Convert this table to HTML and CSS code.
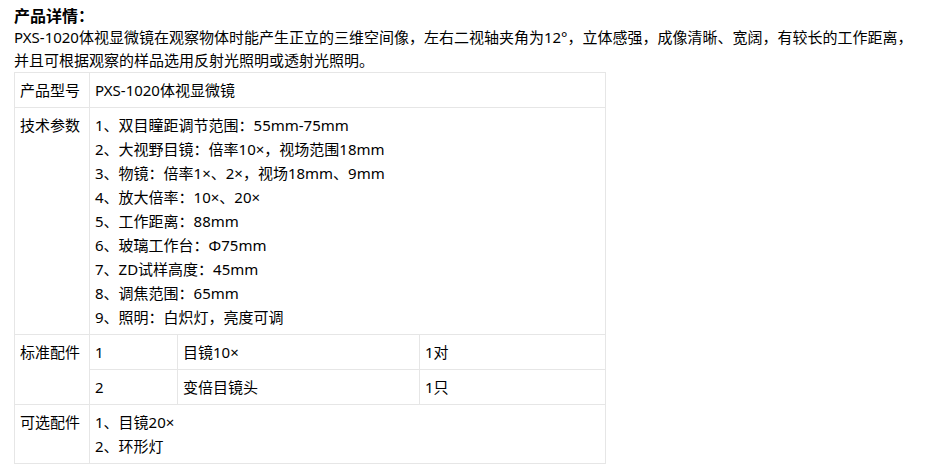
FILE: index.html
```html
<!DOCTYPE html>
<html lang="zh-CN">
<head>
<meta charset="utf-8">
<title>产品详情</title>
<link rel="stylesheet" href="styles.css">
</head>
<body>
<div class="detail">
  <h3 class="detail-title">产品详情：</h3>
  <p class="detail-desc">PXS-1020体视显微镜在观察物体时能产生正立的三维空间像，左右二视轴夹角为12°，立体感强，成像清晰、宽阔，有较长的工作距离，<br>并且可根据观察的样品选用反射光照明或透射光照明。</p>
  <table class="spec">
    <colgroup>
      <col class="c1"><col class="c2"><col class="c3"><col class="c4">
    </colgroup>
    <tbody>
      <tr>
        <td>产品型号</td>
        <td colspan="3">PXS-1020体视显微镜</td>
      </tr>
      <tr>
        <td>技术参数</td>
        <td colspan="3">1、双目瞳距调节范围：55mm-75mm<br>2、大视野目镜：倍率10×，视场范围18mm<br>3、物镜：倍率1×、2×，视场18mm、9mm<br>4、放大倍率：10×、20×<br>5、工作距离：88mm<br>6、玻璃工作台：Φ75mm<br>7、ZD试样高度：45mm<br>8、调焦范围：65mm<br>9、照明：白炽灯，亮度可调</td>
      </tr>
      <tr>
        <td rowspan="2">标准配件</td>
        <td>1</td>
        <td>目镜10×</td>
        <td>1对</td>
      </tr>
      <tr>
        <td>2</td>
        <td>变倍目镜头</td>
        <td>1只</td>
      </tr>
      <tr>
        <td>可选配件</td>
        <td colspan="3">1、目镜20×<br>2、环形灯</td>
      </tr>
    </tbody>
  </table>
</div>
</body>
</html>
```
FILE: styles.css
```css
html, body {
  margin: 0;
  padding: 0;
  background: #fff;
}
body {
  font-family: "Noto Sans", "Noto Sans CJK SC", sans-serif;
  font-size: 15px;
  color: #000;
}
.detail {
  padding: 4px 0 0 14px;
}
.detail-title {
  margin: 0;
  font-family: "Noto Sans CJK SC", sans-serif;
  font-size: 16px;
  font-weight: bold;
  line-height: 22px;
}
.detail-desc {
  margin: 0;
  line-height: 23px;
  white-space: nowrap;
}
.spec {
  border-collapse: collapse;
  table-layout: fixed;
  width: 591px;
}
.spec .c1 { width: 75px; }
.spec .c2 { width: 88px; }
.spec .c3 { width: 242px; }
.spec .c4 { width: 186px; }
.spec td {
  border: 1px solid #e6e6e6;
  padding: 5px;
  line-height: 24px;
  vertical-align: top;
  text-align: left;
}
```
